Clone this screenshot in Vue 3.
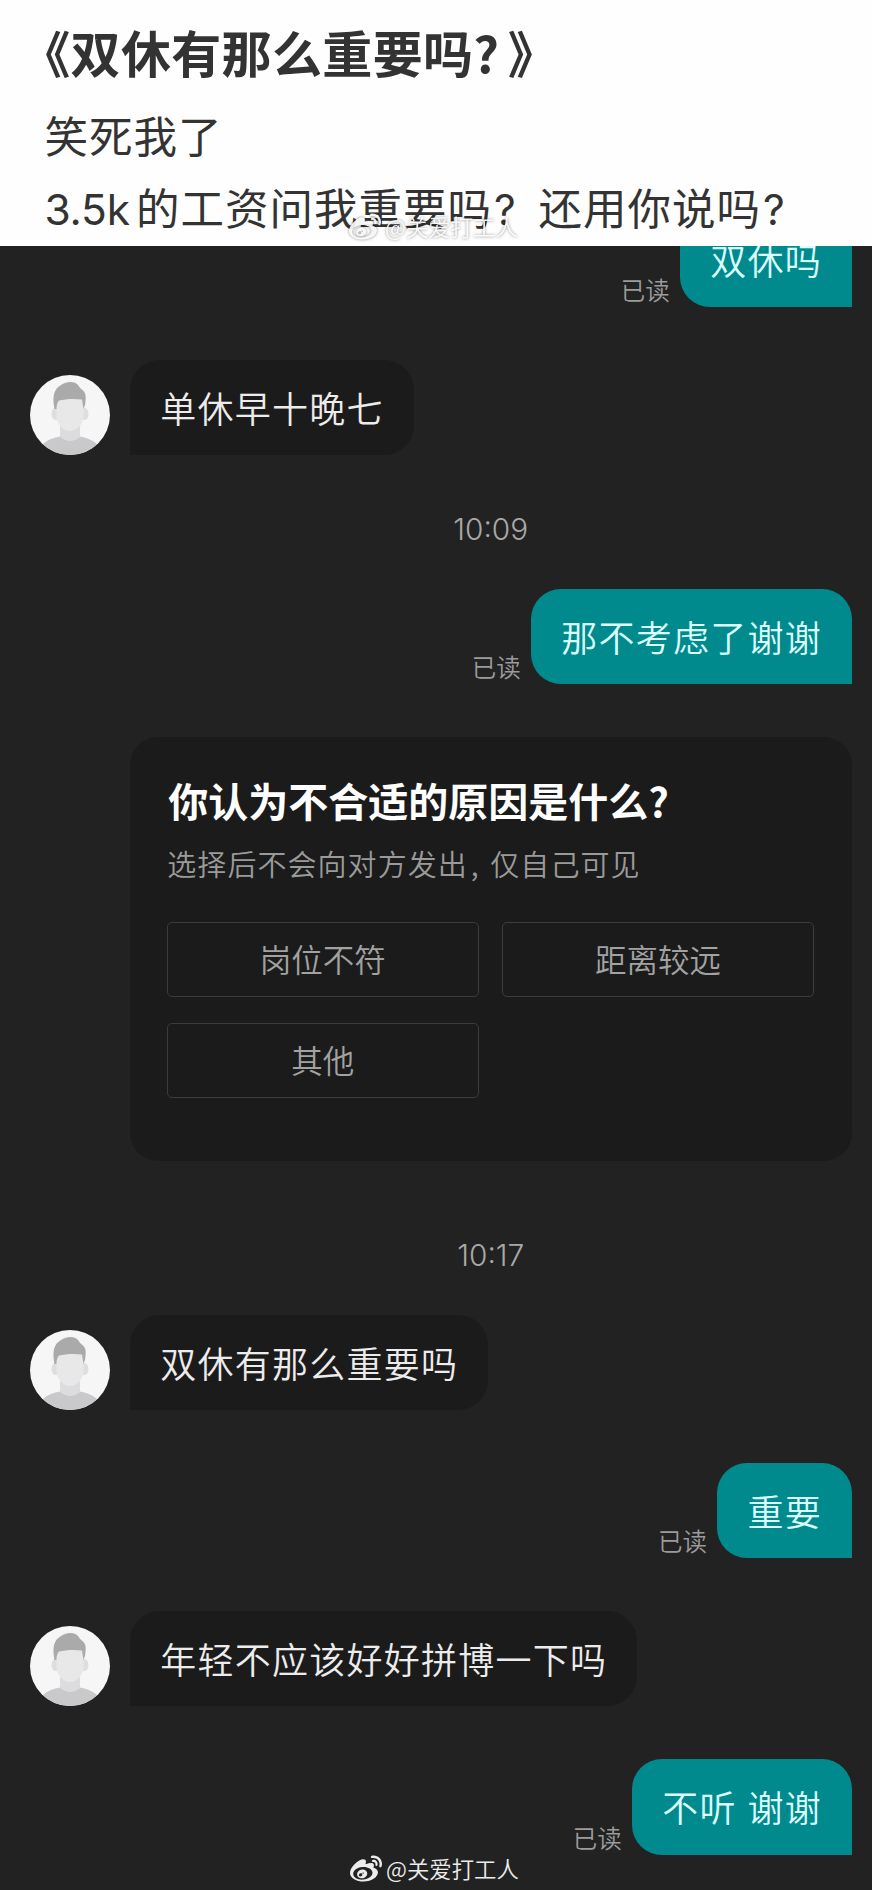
<script setup>
const messages = [
  { kind: 'out', text: '双休吗' },
  { kind: 'in', text: '单休早十晚七' },
  { kind: 'time', text: '10:09' },
  { kind: 'out', text: '那不考虑了谢谢' },
  { kind: 'card' },
  { kind: 'time', text: '10:17', late: true },
  { kind: 'in', text: '双休有那么重要吗' },
  { kind: 'out', text: '重要' },
  { kind: 'in', text: '年轻不应该好好拼博一下吗' },
  { kind: 'out', text: '不听 谢谢' },
]
const reasons = ['岗位不符', '距离较远', '其他']
const weibo =
  'M10.098 20.323c-3.977.391-7.414-1.406-7.672-4.02-.259-2.609 2.759-5.047 6.74-5.441 3.979-.394 7.413 1.404 7.671 4.018.259 2.6-2.759 5.049-6.737 5.439l-.002.004zM9.05 17.219c-.384.616-1.208.884-1.829.602-.612-.279-.793-.991-.406-1.593.379-.595 1.176-.861 1.793-.601.622.263.82.972.442 1.592zm1.27-1.627c-.141.237-.449.353-.689.253-.236-.09-.313-.361-.177-.586.138-.227.436-.346.672-.24.239.09.315.36.18.601l.014-.028zm.176-2.719c-1.893-.493-4.033.45-4.857 2.118-.836 1.704-.026 3.591 1.886 4.21 1.983.64 4.318-.341 5.132-2.179.8-1.793-.201-3.642-2.161-4.149zm7.563-1.224c-.346-.105-.57-.18-.405-.615.375-.977.42-1.804 0-2.404-.781-1.112-2.915-1.053-5.364-.03 0 0-.766.331-.571-.271.376-1.217.315-2.224-.27-2.809-1.338-1.337-4.869.045-7.888 3.08C1.309 10.87 0 13.273 0 15.348c0 3.981 5.099 6.395 10.086 6.395 6.536 0 10.888-3.801 10.888-6.82 0-1.822-1.547-2.854-2.915-3.284v.01zm1.908-5.092c-.766-.856-1.908-1.187-2.96-.962-.436.09-.706.511-.616.932.09.42.511.691.932.602.511-.105 1.067.044 1.442.465.376.421.466.977.316 1.473-.136.406.089.856.51.992.405.119.857-.105.992-.512.33-1.021.12-2.178-.646-3.035l.03.045zm2.418-2.195c-1.576-1.757-3.905-2.419-6.054-1.968-.496.104-.812.587-.706 1.081.104.496.586.813 1.082.707 1.532-.331 3.185.15 4.296 1.383 1.112 1.246 1.429 2.943.947 4.416-.165.48.106 1.007.586 1.157.479.165.991-.104 1.157-.586.675-2.088.241-4.478-1.338-6.235l.03.045z'
</script>

<template>
  <main class="page">
    <header class="post">
      <h1 class="title">《双休有那么重要吗<span class="mark">?</span>》</h1>
      <p class="line">笑死我了</p>
      <p class="line"><span class="latin">3.5k</span>的工资问我重要吗<span class="q">?</span>还用你说吗<span class="q">?</span></p>
      <div class="stamp stamp-light">
        <svg class="stamp-icon" viewBox="0 2 24 20"><path :d="weibo" /></svg>
        <span>@关爱打工人</span>
      </div>
    </header>

    <section class="chat">
      <template v-for="(m, i) in messages" :key="i">
        <div v-if="m.kind === 'time'" class="time" :class="{ late: m.late }">{{ m.text }}</div>

        <div v-else-if="m.kind === 'card'" class="card">
          <h2 class="card-title">你认为不合适的原因是什么<span>?</span></h2>
          <p class="card-sub">选择后不会向对方发出<span class="comma">,</span>仅自己可见</p>
          <div class="reasons">
            <button v-for="r in reasons" :key="r" class="reason">{{ r }}</button>
          </div>
        </div>

        <div v-else-if="m.kind === 'in'" class="row in">
          <svg class="avatar" viewBox="0 0 80 80">
            <defs>
              <clipPath :id="'round' + i"><circle cx="40" cy="40" r="40" /></clipPath>
            </defs>
            <g :clip-path="`url(#round${i})`">
              <rect width="80" height="80" fill="#f6f6f6" />
              <path d="M12 70C18 64 24 63 30 61.500Q40 68 50 61.500C57 63 63 65 68 70V80H12Z" fill="#c9c9cc" />
              <path d="M30 48H50V62Q40 70 30 62Z" fill="#dcdcde" />
              <ellipse cx="25.500" cy="39" rx="4" ry="6" fill="#dedede" />
              <ellipse cx="54.500" cy="39" rx="4" ry="6" fill="#dedede" />
              <path d="M26.500 24H53.500V42C53 50 46 56 40 56S27 50 26.500 42Z" fill="#e8e8e8" />
              <path d="M24.500 34C22 21 24 14 31 10C37 6 45 6 48.500 10.500C49.500 13 51 13.500 53 15.500C56.500 19 56 23 55 30L53.500 34L52 24.500C44 23.500 35 24 29 25.500Q26.500 28 26.500 34Z" fill="#aaa" />
            </g>
          </svg>
          <div class="bubble">{{ m.text }}</div>
        </div>

        <div v-else class="row out">
          <span class="read">已读</span>
          <div class="bubble">{{ m.text }}</div>
        </div>
      </template>
    </section>

    <div class="stamp stamp-dark">
      <svg class="stamp-icon" viewBox="0 2 24 20"><path :d="weibo" /></svg>
      <span>@关爱打工人</span>
    </div>
  </main>
</template>

<style>
body {
  margin: 0;
  background: #222;
}
</style>

<style scoped>
.page {
  position: relative;
  width: 872px;
  height: 1890px;
  overflow: hidden;
  background: #222;
  font-family: "Noto Sans CJK SC", sans-serif;
}
.post {
  position: relative;
  box-sizing: border-box;
  height: 246px;
  padding: 21px 0 0 44.5px;
  background: #fefefe;
  color: #333;
  white-space: nowrap;
}
.title {
  margin: 0 0 18.4px -24.3px;
  font-size: 50px;
  font-weight: 700;
  line-height: 60px;
  letter-spacing: 0.35px;
}
.mark {
  display: inline-block;
  width: 34.4px;
}
.line {
  height: 71.5px;
  margin: 0;
  font-size: 43.5px;
  line-height: 71.5px;
  letter-spacing: 1px;
}
.latin {
  display: inline-block;
  width: 91.5px;
  font-family: Inter, "Noto Sans CJK SC", sans-serif;
  font-size: 42.5px;
  letter-spacing: -0.2px;
}
.q {
  display: inline-block;
  width: 46.5px;
  font-family: Inter, "Noto Sans CJK SC", sans-serif;
  font-size: 42.5px;
  text-indent: 2px;
}
.chat {
  display: flow-root;
  height: 1644px;
  overflow: hidden;
}
.row {
  display: flex;
  align-items: flex-end;
  height: 95.3px;
  margin-top: 52.9px;
  padding: 0 20px 0 30px;
}
.row:first-child {
  margin-top: -34.5px;
}
.out {
  justify-content: flex-end;
}
.avatar {
  width: 80px;
  height: 80px;
  margin-right: 20.3px;
}
.bubble {
  height: 95.3px;
  padding: 0 30px;
  font-size: 36px;
  font-weight: 350;
  line-height: 94px;
  letter-spacing: 1.25px;
  word-spacing: 1.5px;
  white-space: nowrap;
}
.in .bubble {
  border-radius: 30px 30px 30px 2px;
  background: #1b1b1b;
  color: #ececec;
}
.out .bubble {
  border-radius: 30px 30px 0 30px;
  background: #008a8e;
  color: #dcffff;
}
.read {
  margin-right: 10.5px;
  color: #9b9b9b;
  font-size: 24.5px;
  font-weight: 350;
  line-height: 35px;
}
.time {
  height: 40px;
  margin: 51.5px 0 0 130.5px;
  padding-right: 21px;
  color: #a8a8a8;
  font-family: Inter, "Noto Sans CJK SC", sans-serif;
  font-size: 29.8px;
  font-weight: 300;
  line-height: 46px;
  text-align: center;
}
.time.late {
  margin-top: 72px;
  line-height: 44px;
}
.time + .row {
  margin-top: 42.4px;
}
.time.late + .row {
  margin-top: 42px;
}
.card {
  box-sizing: border-box;
  height: 423.5px;
  margin: 53px 20.5px 0 130.3px;
  padding: 38px 37.5px 0 36.5px;
  border-radius: 28px;
  background: #1b1b1b;
}
.card-title {
  margin: 0 0 15px 1.5px;
  color: #fff;
  font-size: 40px;
  font-weight: 700;
  line-height: 50px;
}
.card-sub {
  margin: 0 0 35.5px 0.5px;
  color: #9a9a9a;
  font-size: 29px;
  font-weight: 350;
  line-height: 46px;
  letter-spacing: 1.05px;
}
.comma {
  display: inline-block;
  width: 22.5px;
  text-indent: 3px;
}
.reasons {
  display: grid;
  grid-template-columns: 1fr 1fr;
  grid-auto-rows: 75.5px;
  gap: 25.5px 23px;
}
.reason {
  padding: 0 0 3px;
  border: 1px solid #3c3c3c;
  border-radius: 5px;
  background: none;
  color: #a2a2a2;
  font-family: inherit;
  font-size: 31.5px;
  font-weight: 350;
}
.stamp {
  position: absolute;
  left: 350px;
  display: flex;
  align-items: center;
  gap: 4px;
  color: #ececec;
  font-size: 22.4px;
  font-weight: 350;
  line-height: 30px;
  white-space: nowrap;
}
.stamp-icon {
  width: 32px;
  height: 27px;
  fill: currentColor;
}
.stamp-light {
  top: 211px;
  left: 349px;
  color: rgba(255, 255, 255, 0.9);
  filter: drop-shadow(0 0 1.5px rgba(0, 0, 0, 0.5));
}
.stamp-dark {
  top: 1853px;
}
</style>
